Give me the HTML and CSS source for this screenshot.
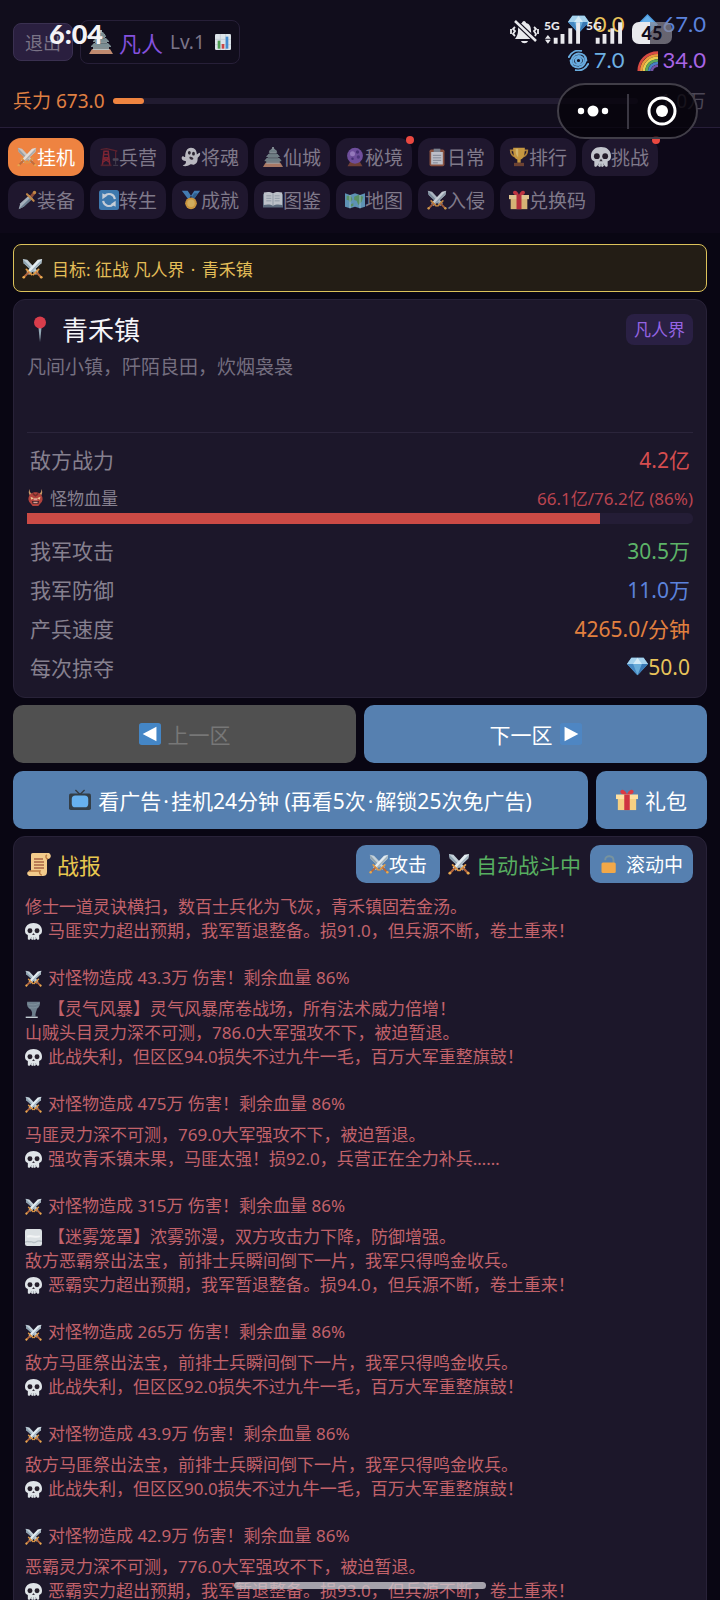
FILE: index.html
```html
<!DOCTYPE html>
<html lang="zh-CN">
<head>
<meta charset="utf-8">
<meta name="viewport" content="width=device-width, initial-scale=1">
<title>青禾镇 · 挂机</title>
<link rel="stylesheet" href="styles.css">
</head>
<body>
<svg class="sprite" aria-hidden="true">
  <symbol id="swords" viewBox="0 0 24 24">
    <path d="M1 1l5 1 13 14-3 3L2 6z" fill="#c3d0d9"/><path d="M1 1l16 17-1 1L2 6z" fill="#8ea3b1"/>
    <path d="M23 1l-5 1L5 16l3 3L22 6z" fill="#e3ecf1"/><path d="M23 1L7 18l1 1L22 6z" fill="#a3b5c0"/>
    <path d="M13 19l6-6M5 13l6 6" stroke="#e09a45" stroke-width="2" stroke-linecap="round"/>
    <path d="M17 17l5 5M7 17l-5 5" stroke="#b5683d" stroke-width="2.4" stroke-linecap="round"/>
    <circle cx="22" cy="22" r="1.5" fill="#e8aa50"/><circle cx="2" cy="22" r="1.5" fill="#e8aa50"/>
  </symbol>
  <symbol id="crane" viewBox="0 0 24 24">
    <path d="M4 22L6 5h5l2 17M5 13h7M6 9h5M5 18l7-5M12 18l-7-5" fill="none" stroke="#8d2734" stroke-width="1.8"/>
    <path d="M2 3l7-1 13 3M20 5v9" fill="none" stroke="#6b2530" stroke-width="1.4"/>
    <path d="M17 14h6v2h-6zM20 16v5M17 22h6" fill="#55505e" stroke="#55505e"/><path d="M2 21h13v2H2z" fill="#5c2430"/>
  </symbol>
  <symbol id="ghost" viewBox="0 0 24 24">
    <path d="M12 1c5 0 7 4 7 8l3-2c2 0 1 4-2 6 0 5-1 7-4 8-2 1-3-1-5 0-3 2-7 3-9 1 3-1 4-2 4-5-3 0-6-2-5-5 1-2 2 0 4 0 0-6 2-11 7-11z" fill="#d5d5da"/>
    <ellipse cx="10" cy="7" rx="1.7" ry="2.2" fill="#2b2630"/><ellipse cx="15" cy="8" rx="1.7" ry="2.2" fill="#2b2630"/><path d="M10 12c2-1 4 0 5 2-1 2-5 2-5-2z" fill="#38303c"/>
  </symbol>
  <symbol id="castle" viewBox="0 0 24 24">
    <path d="M0 24l3-5h18l3 5z" fill="#c08a6f"/><path d="M4 14h16v6H4z" fill="#b9bfbf"/><path d="M6 9h12v4H6zM8 4h8v4H8z" fill="#c9cecd"/>
    <path d="M2 16l3-3h14l3 3v1H2zM4 11l3-3h10l3 3v1H4zM7 6l3-4h4l3 4v1H7z" fill="#7d8f94"/><path d="M4 18h16M6 13h12M8 8h8" stroke="#4d5d63"/><path d="M11 0h2v3h-2z" fill="#a5b2b5"/>
  </symbol>
  <symbol id="orb" viewBox="0 0 24 24">
    <path d="M3 23l3-5h12l3 5z" fill="#7c4639"/><circle cx="12" cy="10.500" r="9.500" fill="#7c58ae"/><circle cx="9" cy="8" r="3" fill="#a98bd4"/><circle cx="15" cy="6" r="2" fill="#4c3380"/><circle cx="16" cy="12" r="2" fill="#543b89"/><circle cx="9" cy="14" r="1.500" fill="#4c3380"/>
  </symbol>
  <symbol id="clipboard" viewBox="0 0 24 24">
    <rect x="3" y="3" width="18" height="20" rx="2" fill="#9c5c42"/><path d="M5 6h14v15H5z" fill="#d9dde3"/><path d="M8 2h8v4H8z" fill="#8b939e"/><path d="M7 10h10M7 13h10M7 16h10M7 19h6" stroke="#858e9d"/>
  </symbol>
  <symbol id="trophy" viewBox="0 0 24 24">
    <path d="M6 4H2c0 5 2 7 6 8M18 4h4c0 5-2 7-6 8" fill="none" stroke="#c4913b" stroke-width="2"/><path d="M5 1h14c0 8-1 13-5 14v4h-4v-4C6 14 5 9 5 1z" fill="#e2ae44"/><path d="M8 2h3v10C8 10 8 6 8 2z" fill="#f3d27a"/><path d="M6 19h12v4H6z" fill="#7b4a33"/>
  </symbol>
  <symbol id="skull" viewBox="0 0 24 24">
    <path d="M12 0c7 0 12 4 12 11 0 3-1 5-4 6v6l-2 1-2-2-2 2-2-1-2 1-2-2-2 2-2-1v-6c-3-1-4-3-4-6C0 4 5 0 12 0z" fill="#dfe4e8"/>
    <circle cx="7" cy="11" r="3.500" fill="#251f2b"/><circle cx="17" cy="11" r="3.500" fill="#251f2b"/><path d="M12 14l2 3h-4z" fill="#3a3440"/><path d="M9 20v2M12 20v3M15 20v2" stroke="#8f979f"/>
  </symbol>
  <symbol id="dagger" viewBox="0 0 24 24">
    <path d="M2 23l2-7L15 6l4 4L8 20z" fill="#bccbd4"/><path d="M2 23L17 8l2 2L8 20z" fill="#7890a0"/><path d="M12 5l8 8" stroke="#dc9a4b" stroke-width="2.500" stroke-linecap="round"/><path d="M17 8l4-5" stroke="#a3583a" stroke-width="3.500"/><circle cx="21" cy="3" r="2" fill="#dd9b48"/>
  </symbol>
  <symbol id="refresh" viewBox="0 0 24 24">
    <rect width="24" height="24" rx="3" fill="#4389c4"/><path d="M5 13a7 7 0 0 0 12 4M19 11A7 7 0 0 0 7 7" fill="none" stroke="#e3edf5" stroke-width="2.500"/><path d="M20 13v7l-6-3zM4 11V4l6 3z" fill="#e3edf5"/>
  </symbol>
  <symbol id="medal" viewBox="0 0 24 24">
    <path d="M1 1h7l6 9-4 3zM23 1h-7l-6 9 4 3z" fill="#4a8dc9"/><path d="M12 10l4-6 4 0-5 8z" fill="#326b9f"/><circle cx="12" cy="16" r="7" fill="#e6a940"/><circle cx="12" cy="16" r="4.500" fill="#f2c666"/>
  </symbol>
  <symbol id="book" viewBox="0 0 24 24">
    <path d="M0 5h24v16H0z" fill="#66798a"/><path d="M1 3c4-1 8-1 11 1v15c-3-2-7-2-11-1zM23 3c-4-1-8-1-11 1v15c3-2 7-2 11-1z" fill="#d8dfe4"/><path d="M12 4v15M4 7h6M4 10h6M4 13h6M14 7h6M14 10h6M14 13h6" stroke="#9aa9b4"/>
  </symbol>
  <symbol id="map" viewBox="0 0 24 24">
    <path d="M0 4l6 2 6-2 6 2 6-2v16l-6 2-6-2-6 2-6-2z" fill="#69a9cd"/><path d="M2 7l5 0 2 4-3 4-2-3-2 0zM11 8l5-2 6 2-2 6-4 4-2-5-3-1zM7 17l3-1v3l-3 1z" fill="#62a46c"/><path d="M6 6v16M18 6v16" stroke="#b8dcea"/>
  </symbol>
  <symbol id="gift" viewBox="0 0 24 24">
    <path d="M12 6C7 7 4 5 5 2c2-3 6 0 7 4 1-4 5-7 7-4 1 3-2 5-7 4z" fill="#d93a45"/><path d="M2 10h20v13H2z" fill="#f5cf82"/><path d="M0 6h24v5H0z" fill="#ffe0a0"/><path d="M9 6h6v17H9z" fill="#cf3440"/>
  </symbol>
  <symbol id="pin" viewBox="0 0 24 24">
    <path d="M10.500 10h3L12 24z" fill="#94a9b5"/><circle cx="12" cy="6" r="5.500" fill="#d83d4b"/>
  </symbol>
  <symbol id="ogre" viewBox="0 0 24 24">
    <path d="M4 0c-1 4 1 6 4 8l-4 1C2 6 2 3 4 0zM20 0c1 4-1 6-4 8l4 1c2-3 2-6 0-9z" fill="#c99a68"/><path d="M5 7c4-3 10-3 14 0 3 3 4 7 2 11l-5 6H8l-5-6C1 14 2 10 5 7z" fill="#b3423d"/><path d="M8 5l4 3 4-3v3l-4 3-4-3z" fill="#74302c"/><path d="M5 11l5 2-4 2zM19 11l-5 2 4 2z" fill="#ecc692"/><path d="M7 17h10l-1 4H8z" fill="#40202a"/><path d="M9 18h6v2H9zM10 13h4l1 3H9z" fill="#dca090"/>
  </symbol>
  <symbol id="gem" viewBox="0 0 24 24">
    <path d="M5 2h14l5 7-12 13L0 9z" fill="#68acd9"/><path d="M5 2h14l5 7H0z" fill="#a5d2ed"/><path d="M7 9l5 13L0 9z" fill="#4688c2"/><path d="M17 9l-5 13L24 9z" fill="#3878b4"/><path d="M12 2l5 7H7z" fill="#d2eaf7"/>
  </symbol>
  <symbol id="rhomb" viewBox="0 0 24 24"><path d="M12 0l12 12-12 12L0 12z" fill="#4c9ae0"/><path d="M12 2l10 10H2z" fill="#67b0eb"/></symbol>
  <symbol id="swirl" viewBox="0 0 24 24">
    <g fill="none" stroke="#69acdf" stroke-width="2.300" stroke-linecap="round"><circle cx="12" cy="12" r="3"/><path d="M5 17A9 9 0 0 1 12 4c5 0 9 3 9 8M19 7a9 9 0 0 1-7 13c-5 0-9-3-9-8M1 8C4 2 10 0 15 1M23 16c-3 6-9 8-14 7"/><path d="M6 13c0-4 3-6 6-6s6 2 6 5-3 5-6 5-6-1-6-4z"/></g>
  </symbol>
  <symbol id="rainbow" viewBox="0 0 24 24">
    <g fill="none" stroke-width="3"><path d="M2 24C2 12 11 3 24 3" stroke="#d84b43"/><path d="M5 24C5 14 13 6 24 6" stroke="#ee9b3e"/><path d="M8 24C8 16 14 9 24 9" stroke="#e7ce50"/><path d="M11 24c0-7 5-12 13-12" stroke="#5ba75b"/><path d="M14 24c0-5 4-9 10-9" stroke="#4880c5"/><path d="M17 24c0-3 3-6 7-6" stroke="#7353a5"/></g>
  </symbol>
  <symbol id="prev" viewBox="0 0 24 24"><rect width="24" height="24" rx="3" fill="#4486c6"/><path d="M19 4v16L4 12z" fill="#fff"/></symbol>
  <symbol id="next" viewBox="0 0 24 24"><rect width="24" height="24" rx="3" fill="#4e86c3"/><path d="M5 4v16l15-8z" fill="#fff"/></symbol>
  <symbol id="tv" viewBox="0 0 24 24"><path d="M7 1l5 5 5-5" fill="none" stroke="#343c44" stroke-width="1.500"/><rect y="5" width="24" height="18" rx="2" fill="#333e47"/><rect x="3" y="7" width="18" height="13" rx="4" fill="#67b1ee"/></symbol>
  <symbol id="scroll" viewBox="0 0 24 24">
    <path d="M6 1h16c3 2 2 6-1 6h-1v13c0 3-2 4-4 4H2c-3-2-2-5 1-5h1V4c0-2 0-3 2-3z" fill="#f3cb8b"/><path d="M20 3c-2 1-1 4 1 4M2 19h11c-1 2 0 4 2 4" fill="none" stroke="#bd7e45" stroke-width="1.500"/><path d="M7 7h9M7 10h10M7 13h10M7 16h10" stroke="#a96545" stroke-width="1.300"/>
  </symbol>
  <symbol id="lock" viewBox="0 0 24 24"><path d="M7 7V6c0-6 11-6 11 1v5" fill="none" stroke="#78939e" stroke-width="2.500"/><rect x="2" y="10" width="19" height="14" rx="2" fill="#f2a849"/></symbol>
  <symbol id="tornado" viewBox="0 0 24 24"><path d="M3 1h18c1 4-1 8-4 10-1 4-3 7-2 11H9c2-4 1-7-1-10C4 10 2 6 3 1z" fill="#6d7e8c"/><path d="M4 4c5 2 11 2 16-1M6 9c4 1 8 1 12-1" fill="none" stroke="#8797a3"/><path d="M1 22h17v2H1z" fill="#c1cbd1"/></symbol>
  <symbol id="fog" viewBox="0 0 24 24"><rect width="24" height="24" rx="3" fill="#dce1e4"/><path d="M0 19c3-3 6 0 8-1s4 3 8 0 5 0 8-1" fill="none" stroke="#b7bfc4" stroke-width="2"/><path d="M3 11c5-3 12 2 18-1" fill="none" stroke="#f2f4f5" stroke-width="3"/></symbol>
  <symbol id="chart" viewBox="0 0 24 24"><rect width="24" height="24" rx="2" fill="#dce3e9"/><path d="M8 0v24M16 0v24M0 8h24M0 16h24" stroke="#bac6d0"/><path d="M4 10h4v12H4z" fill="#4f9d53"/><path d="M10 15h4v7h-4z" fill="#cc4545"/><path d="M16 4h4v18h-4z" fill="#438bd0"/></symbol>
</svg>

<header class="top">
  <div class="top-row">
    <button class="exit" type="button">退出</button>
    <button class="rank" type="button"><svg class="i24"><use href="#castle"/></svg><span class="rank-name">凡人</span><span class="rank-level">Lv.1</span><svg class="i16"><use href="#chart"/></svg></button>
    <div class="wealth">
      <div class="wealth-row"><span class="coin gold"><svg class="i21"><use href="#gem"/></svg>0.0</span><span class="coin blue"><svg class="i21"><use href="#rhomb"/></svg>67.0</span></div>
      <div class="wealth-row"><span class="coin sky"><svg class="i21"><use href="#swirl"/></svg>7.0</span><span class="coin violet"><svg class="i21"><use href="#rainbow"/></svg>34.0</span></div>
    </div>
  </div>
  <div class="force"><span>兵力 673.0</span><div class="force-bar"><div class="force-fill" style="width:6%"></div></div><span class="force-max">1.0万</span></div>
</header>

<nav class="tabs">
  <button class="tab active" type="button"><svg class="i20"><use href="#swords"/></svg>挂机</button>
  <button class="tab" type="button"><svg class="i20"><use href="#crane"/></svg>兵营</button>
  <button class="tab" type="button"><svg class="i20"><use href="#ghost"/></svg>将魂</button>
  <button class="tab" type="button"><svg class="i20"><use href="#castle"/></svg>仙城</button>
  <button class="tab dot" type="button"><svg class="i20"><use href="#orb"/></svg>秘境</button>
  <button class="tab" type="button"><svg class="i20"><use href="#clipboard"/></svg>日常</button>
  <button class="tab" type="button"><svg class="i20"><use href="#trophy"/></svg>排行</button>
  <button class="tab dot" type="button"><svg class="i20"><use href="#skull"/></svg>挑战</button>
  <button class="tab" type="button"><svg class="i20"><use href="#dagger"/></svg>装备</button>
  <button class="tab" type="button"><svg class="i20"><use href="#refresh"/></svg>转生</button>
  <button class="tab" type="button"><svg class="i20"><use href="#medal"/></svg>成就</button>
  <button class="tab" type="button"><svg class="i20"><use href="#book"/></svg>图鉴</button>
  <button class="tab" type="button"><svg class="i20"><use href="#map"/></svg>地图</button>
  <button class="tab" type="button"><svg class="i20"><use href="#swords"/></svg>入侵</button>
  <button class="tab" type="button"><svg class="i20"><use href="#gift"/></svg>兑换码</button>
</nav>

<main class="main">
  <div class="goal"><svg class="i21"><use href="#swords"/></svg><span>目标: 征战 凡人界 <span class="sep">·</span> 青禾镇</span></div>

  <section class="card place">
    <div class="place-head"><svg class="i26"><use href="#pin"/></svg><h1>青禾镇</h1><span class="realm">凡人界</span></div>
    <p class="place-desc">凡间小镇，阡陌良田，炊烟袅袅</p>
    <div class="stats">
      <div class="stat"><span>敌方战力</span><span class="red">4.2亿</span></div>
      <div class="hp"><svg class="i17"><use href="#ogre"/></svg><span>怪物血量</span><span class="hp-value">66.1亿/76.2亿 (86%)</span></div>
      <div class="hp-bar"><div class="hp-fill" style="width:86%"></div></div>
      <div class="stat"><span>我军攻击</span><span class="green">30.5万</span></div>
      <div class="stat"><span>我军防御</span><span class="blue">11.0万</span></div>
      <div class="stat"><span>产兵速度</span><span class="orange">4265.0/分钟</span></div>
      <div class="stat"><span>每次掠夺</span><span class="gold"><svg class="i21"><use href="#gem"/></svg>50.0</span></div>
    </div>
  </section>

  <div class="actions">
    <div class="action-row">
      <button class="btn grow" type="button" disabled><svg class="i22"><use href="#prev"/></svg>上一区</button>
      <button class="btn grow" type="button">下一区<svg class="i22"><use href="#next"/></svg></button>
    </div>
    <div class="action-row">
      <button class="btn grow" type="button"><svg class="i22"><use href="#tv"/></svg><span>看广告<span class="sep">·</span>挂机24分钟 (再看5次<span class="sep">·</span>解锁25次免广告)</span></button>
      <button class="btn pack" type="button"><svg class="i22"><use href="#gift"/></svg>礼包</button>
    </div>
  </div>

  <section class="card report">
    <div class="report-head">
      <svg class="i24"><use href="#scroll"/></svg><h2>战报</h2>
      <button class="btn small attack" type="button"><svg class="i20"><use href="#swords"/></svg>攻击</button>
      <span class="auto"><svg class="i22"><use href="#swords"/></svg>自动战斗中</span>
      <button class="btn small scrolling" type="button"><svg class="i18"><use href="#lock"/></svg>滚动中</button>
    </div>
    <div class="log">
      <div class="story">
        <p>修士一道灵诀横扫，数百士兵化为飞灰，青禾镇固若金汤。</p>
        <p><svg class="i17"><use href="#skull"/></svg>马匪实力超出预期，我军暂退整备。损91.0，但兵源不断，卷土重来！</p>
      </div>
      <p class="hit"><svg class="i17"><use href="#swords"/></svg>对怪物造成 43.3万 伤害！剩余血量 86%</p>
      <div class="story">
        <p><svg class="i17"><use href="#tornado"/></svg>【灵气风暴】灵气风暴席卷战场，所有法术威力倍增！</p>
        <p>山贼头目灵力深不可测，786.0大军强攻不下，被迫暂退。</p>
        <p><svg class="i17"><use href="#skull"/></svg>此战失利，但区区94.0损失不过九牛一毛，百万大军重整旗鼓！</p>
      </div>
      <p class="hit"><svg class="i17"><use href="#swords"/></svg>对怪物造成 475万 伤害！剩余血量 86%</p>
      <div class="story">
        <p>马匪灵力深不可测，769.0大军强攻不下，被迫暂退。</p>
        <p><svg class="i17"><use href="#skull"/></svg>强攻青禾镇未果，马匪太强！损92.0，兵营正在全力补兵……</p>
      </div>
      <p class="hit"><svg class="i17"><use href="#swords"/></svg>对怪物造成 315万 伤害！剩余血量 86%</p>
      <div class="story">
        <p><svg class="i17"><use href="#fog"/></svg>【迷雾笼罩】浓雾弥漫，双方攻击力下降，防御增强。</p>
        <p>敌方恶霸祭出法宝，前排士兵瞬间倒下一片，我军只得鸣金收兵。</p>
        <p><svg class="i17"><use href="#skull"/></svg>恶霸实力超出预期，我军暂退整备。损94.0，但兵源不断，卷土重来！</p>
      </div>
      <p class="hit"><svg class="i17"><use href="#swords"/></svg>对怪物造成 265万 伤害！剩余血量 86%</p>
      <div class="story">
        <p>敌方马匪祭出法宝，前排士兵瞬间倒下一片，我军只得鸣金收兵。</p>
        <p><svg class="i17"><use href="#skull"/></svg>此战失利，但区区92.0损失不过九牛一毛，百万大军重整旗鼓！</p>
      </div>
      <p class="hit"><svg class="i17"><use href="#swords"/></svg>对怪物造成 43.9万 伤害！剩余血量 86%</p>
      <div class="story">
        <p>敌方马匪祭出法宝，前排士兵瞬间倒下一片，我军只得鸣金收兵。</p>
        <p><svg class="i17"><use href="#skull"/></svg>此战失利，但区区90.0损失不过九牛一毛，百万大军重整旗鼓！</p>
      </div>
      <p class="hit"><svg class="i17"><use href="#swords"/></svg>对怪物造成 42.9万 伤害！剩余血量 86%</p>
      <div class="story">
        <p>恶霸灵力深不可测，776.0大军强攻不下，被迫暂退。</p>
        <p><svg class="i17"><use href="#skull"/></svg>恶霸实力超出预期，我军暂退整备。损93.0，但兵源不断，卷土重来！</p>
      </div>
    </div>
  </section>
</main>

<div class="clock">6:04</div>
<div class="status">
  <svg class="mute" viewBox="0 0 29 24"><path d="M14 1c1 0 2 1 2 2 4 1 5 4 5 8 0 3 1 5 3 8H5c2-3 3-5 3-8 0-4 1-7 4-8 0-1 1-2 2-2zM11 21h7c-1 3-6 3-7 0z" fill="#e9e9ed"/><path d="M5 1l21 20" stroke="#110d1c" stroke-width="5"/><path d="M5 1l21 20" stroke="#e9e9ed" stroke-width="2.500"/><path d="M5 7L3 9l2 2-2 3 2 2M1 9v5M24 7l2 2-2 2 2 3-1 2M28 9v5" fill="none" stroke="#e9e9ed" stroke-width="1.800"/></svg>
  <div class="signal"><span>5G</span><svg viewBox="0 0 38 22"><path d="M1 17l3-4 3 4zM1 18l3 4 3-4zM10 16h4v6h-4zM17 12h4v10h-4zM25 6h4v16h-4zM33 0h4v22h-4z" fill="#e9e9ed"/></svg></div>
  <div class="signal"><span>5G</span><svg viewBox="0 0 38 22"><path d="M10 16h4v6h-4zM17 12h4v10h-4zM25 6h4v16h-4zM33 0h4v22h-4z" fill="#e9e9ed"/></svg></div>
  <div class="battery">45</div>
</div>
<div class="capsule">
  <button type="button" aria-label="更多"><svg viewBox="0 0 32 12"><circle cx="4" cy="6" r="3.200" fill="#fff"/><circle cx="16" cy="6" r="5.500" fill="#fff"/><circle cx="28" cy="6" r="3.200" fill="#fff"/></svg></button>
  <button type="button" aria-label="关闭"><svg viewBox="0 0 30 30"><circle cx="15" cy="15" r="13" fill="none" stroke="#fff" stroke-width="3"/><circle cx="15" cy="15" r="6" fill="#fff"/></svg></button>
</div>
<div class="home-bar"></div>
</body>
</html>
```

FILE: styles.css
```css
* { box-sizing: border-box; }

html, body { height: 100%; }

body {
  margin: 0;
  overflow: hidden;
  background: #090613;
  color: #86808f;
  font-family: "Noto Sans", "Noto Sans CJK SC", sans-serif;
  font-size: 17px;
}

h1, h2, p { margin: 0; font-weight: 400; }

button { font: inherit; color: inherit; border: 0; padding: 0; white-space: nowrap; }

svg { display: block; flex: none; }

.sprite { position: absolute; width: 0; height: 0; }

.i16 { width: 16px; height: 16px; }
.i17 { width: 17px; height: 17px; }
.i18 { width: 18px; height: 18px; }
.i20 { width: 20px; height: 20px; }
.i21 { width: 21px; height: 21px; }
.i22 { width: 22px; height: 22px; }
.i24 { width: 24px; height: 24px; }
.i26 { width: 26px; height: 26px; }

.red { color: #d64d4f; }
.green { color: #5db368; }
.blue { color: #5b82dc; }
.orange { color: #e2803f; }
.gold { color: #e8c35a; }
.sky { color: #6db0e2; }
.violet { color: #a864e4; }

.sep { padding: 0 2px; }

/* Header */
.top {
  padding: 6px 14px 12px 13px;
  background: #110d1c;
  border-bottom: 1px solid #271e39;
}

.top-row { display: flex; align-items: center; gap: 7px; }

.exit {
  height: 38px;
  padding: 0 11px;
  border: 1px solid #3a3050;
  border-radius: 8px;
  background: #2a1f3f;
  color: #7a7386;
  font-size: 18px;
}

.rank {
  display: flex;
  align-items: center;
  height: 44px;
  padding: 0 8px;
  border: 1px solid #271f38;
  border-radius: 8px;
  background: transparent;
}

.rank-name { margin-left: 6px; color: #8451dd; font-size: 22px; }
.rank-level { margin: 0 10px 0 7px; color: #7b7588; font-size: 19px; }

.wealth { margin-left: auto; font-family: Lato, sans-serif; font-size: 22px; line-height: 36px; }
.wealth-row { display: flex; justify-content: flex-end; gap: 12px; }
.coin { display: flex; align-items: center; gap: 5px; }

.force {
  display: flex;
  align-items: center;
  gap: 8px;
  margin-top: 9px;
  color: #e08043;
  font-size: 19px;
  line-height: 28px;
}

.force-bar { flex: 1; height: 6px; border-radius: 3px; background: #211b30; }
.force-fill { height: 100%; border-radius: 3px; background: #ef8440; }
.force-max { width: 60px; color: #4b4655; text-align: right; }

/* Tabs */
.tabs {
  display: flex;
  flex-wrap: wrap;
  gap: 5px 6px;
  padding: 10px 8px 14px;
  background: #0d0818;
}

.tab {
  position: relative;
  display: flex;
  align-items: center;
  height: 38px;
  padding: 0 9px;
  border-radius: 13px;
  background: #1f172e;
  color: #7f798a;
  font-size: 19px;
}

.tab svg { opacity: .85; }
.tab.active { background: #ee8341; color: #fff; }

.tab.dot::after {
  content: "";
  position: absolute;
  top: -2px;
  right: -2px;
  width: 8px;
  height: 8px;
  border-radius: 50%;
  background: #ea4840;
}

/* Main column */
.main { display: flex; flex-direction: column; gap: 7px; padding: 11px 13px; }

.goal {
  display: flex;
  align-items: center;
  gap: 9px;
  height: 48px;
  padding: 0 8px;
  border: 1px solid #dcc25a;
  border-radius: 8px;
  background: #231d15;
  color: #e3bd58;
}

.card { border: 1px solid #282238; border-radius: 12px; background: #1c172a; }

.place { padding: 10px 13px 11px; }
.place-head { display: flex; align-items: center; gap: 9px; height: 38px; }
.place-head h1 { color: #f5f4f8; font-size: 26px; }

.realm {
  margin-left: auto;
  padding: 0 8px;
  border-radius: 8px;
  background: #2a2044;
  color: #9664e3;
  line-height: 31px;
}

.place-desc { margin-top: 6px; color: #756f80; font-size: 19px; line-height: 26px; }

.stats { margin-top: 52px; padding-top: 6px; border-top: 1px solid #2b253b; }

.stat {
  display: flex;
  align-items: center;
  justify-content: space-between;
  height: 39px;
  padding: 0 3px;
  font-size: 21px;
}

.stat .gold { display: flex; align-items: center; }

.hp { display: flex; align-items: center; gap: 6px; height: 35px; padding-top: 4px; }
.hp-value { margin-left: auto; color: #ba4450; }
.hp-bar { height: 11px; margin-bottom: 6px; border-radius: 5px; background: #241d36; }
.hp-fill { height: 100%; background: #cb4a45; }

.actions { display: flex; flex-direction: column; gap: 8px; }
.action-row { display: flex; gap: 8px; }

.btn {
  display: flex;
  align-items: center;
  justify-content: center;
  gap: 7px;
  height: 58px;
  border-radius: 10px;
  background: #5680b0;
  color: #fff;
  font-size: 21px;
}

.btn:disabled { background: #505050; color: #777; }
.grow { flex: 1; }
.pack { padding: 0 20px; }

/* Battle report */
.report { padding: 8px 11px 24px; }
.report-head { display: flex; align-items: center; padding: 0 2px; }
.report-head h2 { margin: 0 auto 0 6px; color: #e9c84f; font-size: 22px; }

.small { height: 38px; font-size: 19px; }
.attack { gap: 0; padding: 0 13px; }
.scrolling { gap: 8px; padding: 0 10px; }

.auto {
  display: flex;
  align-items: center;
  gap: 6px;
  margin: 0 9px 0 8px;
  color: #57ae60;
  font-size: 21px;
}

.log { margin-top: 12px; color: #c2626a; line-height: 24px; }
.log p { display: flex; align-items: center; gap: 6px; height: 24px; white-space: pre; }
.log .hit { margin-bottom: 7px; }
.story { margin-bottom: 23px; }

/* Phone overlays */
.clock {
  position: absolute;
  top: 18px;
  left: 49px;
  color: #f4f3f6;
  font-family: Lato, sans-serif;
  font-size: 27px;
  font-weight: 900;
  line-height: 32px;
}

.status {
  position: absolute;
  top: 20px;
  right: 48px;
  display: flex;
  gap: 5px;
  font-family: Lato, sans-serif;
}

.mute { width: 29px; height: 24px; }

.signal { position: relative; width: 37px; height: 24px; }
.signal svg { width: 37px; height: 22px; margin-top: 2px; }

.signal span {
  position: absolute;
  top: 0;
  left: 0;
  color: #e9e9ed;
  font-size: 12px;
  font-weight: 900;
  line-height: 11px;
}

.battery {
  width: 40px;
  height: 22px;
  margin: 2px 0 0 4px;
  border-radius: 7px;
  background: linear-gradient(90deg, #e9e9ed 45%, rgba(140, 138, 148, .7) 45%);
  color: #110d1c;
  font-size: 18px;
  font-weight: 900;
  line-height: 22px;
  text-align: center;
}

.capsule {
  position: absolute;
  top: 83px;
  right: 22px;
  display: flex;
  align-items: center;
  width: 141px;
  height: 56px;
  border: 2px solid #413e48;
  border-radius: 28px;
  background: rgba(5, 3, 10, .75);
}

.capsule button { flex: 1; display: flex; justify-content: center; background: none; }
.capsule button + button { height: 35px; align-items: center; border-left: 2px solid #3a3742; }
.capsule button:first-child svg { width: 32px; height: 12px; }
.capsule button:last-child svg { width: 30px; height: 30px; }

.home-bar {
  position: absolute;
  bottom: 11px;
  left: 50%;
  width: 35%;
  height: 7px;
  border-radius: 4px;
  background: rgba(200, 198, 204, .8);
  transform: translateX(-50%);
}
```
